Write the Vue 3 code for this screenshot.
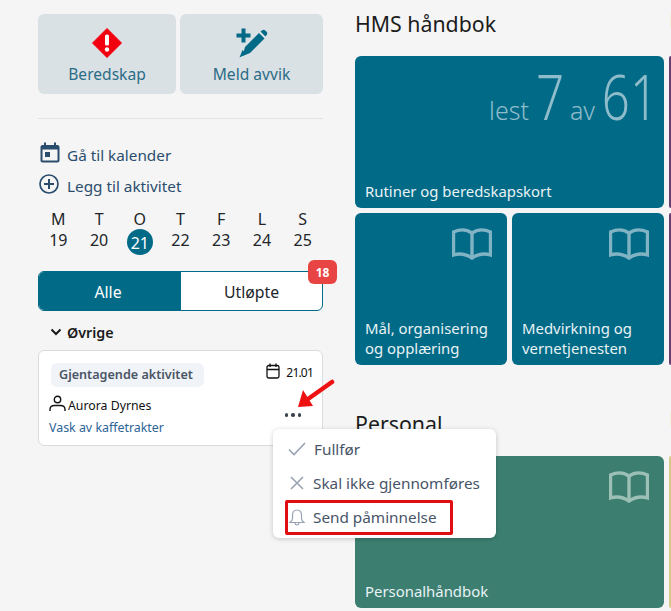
<script setup>
const days = [['M', 19], ['T', 20], ['O', 21], ['T', 22], ['F', 23], ['L', 24], ['S', 25]]
const book = 'M1.5 4C8 1 15 1.5 20 5C25 1.5 32 1 38.5 4V27C32 25 26 26 20 30C14 26 8 25 1.5 27Z'
</script>

<template>
  <div class="page">
    <aside class="left">
      <div class="actions">
        <div class="action first">
          <svg width="30" height="30" viewBox="0 0 30 30">
            <path d="M15 0.5L29.5 15L15 29.5L0.5 15Z" fill="#f2000f" stroke="#f2000f" stroke-linejoin="round" />
            <rect x="13" y="6.5" width="4" height="11" rx="1.6" fill="#fff" />
            <circle cx="15" cy="21.5" r="2.2" fill="#fff" />
          </svg>
          <span>Beredskap</span>
        </div>
        <div class="action second">
          <svg width="32" height="30" viewBox="0 0 32 30">
            <path d="M5.5 0.5H9.5V5.5H14.5V9.5H9.5V14.5H5.5V9.5H0.5V5.5H5.5Z" fill="#006a87" />
            <path d="M23 5L28.5 10.5L14 25L6.5 28L9 19Z" fill="#006a87" />
            <path d="M24.5 3.6L26 2.4C27 1.6 28.2 1.6 29.2 2.4L30.6 3.8C31.5 4.8 31.5 6 30.6 7L29.4 8.4Z" fill="#006a87" />
            <path d="M3.5 29.5L6.5 22L10.5 26Z" fill="#006a87" />
          </svg>
          <span>Meld avvik</span>
        </div>
      </div>
      <hr class="rule" />
      <div class="link cal-link">
        <svg width="20" height="21" viewBox="0 0 20 21">
          <path d="M4 0.5H6V3H14V0.5H16V3H17.5C18.6 3 19.5 3.9 19.5 5V18.5C19.5 19.6 18.6 20.5 17.5 20.5H2.5C1.4 20.5 0.5 19.6 0.5 18.5V5C0.5 3.9 1.4 3 2.5 3H4ZM2.5 7.5V18.5H17.5V7.5Z" fill="#2a4d6e" />
          <rect x="5" y="10" width="5" height="5" fill="#2a4d6e" />
        </svg>
        <span>Gå til kalender</span>
      </div>
      <div class="link add-link">
        <svg width="20" height="20" viewBox="0 0 20 20" fill="none" stroke="#2a4d6e" stroke-width="1.7">
          <circle cx="10" cy="10" r="9" />
          <path d="M10 5V15M5 10H15" stroke-width="2" />
        </svg>
        <span>Legg til aktivitet</span>
      </div>
      <div class="week">
        <div v-for="d in days" :key="d[1]" class="day">
          <span>{{ d[0] }}</span>
          <span class="num" :class="{ today: d[1] === 21 }">{{ d[1] }}</span>
        </div>
      </div>
      <div class="tabs">
        <div class="tab on">Alle</div>
        <div class="tab">Utløpte</div>
        <span class="badge">18</span>
      </div>
      <div class="group">
        <svg width="12" height="8" viewBox="0 0 12 8" fill="none" stroke="#1a1a1a" stroke-width="2">
          <path d="M1.5 1.5L6 6L10.5 1.5" />
        </svg>
        <span>Øvrige</span>
      </div>
      <div class="card">
        <div class="card-top">
          <span class="tag">Gjentagende aktivitet</span>
          <span class="date">
            <svg width="14" height="16" viewBox="0 0 14 16" fill="none" stroke="#111" stroke-width="1.3">
              <rect x="1" y="2.5" width="12" height="12.5" rx="1.8" />
              <path d="M1 6.5H13M4 0.5V4M10 0.5V4" />
            </svg>
            <span class="date-text">21.01</span>
          </span>
        </div>
        <div class="person">
          <svg width="17" height="17" viewBox="0 0 17 17" fill="none" stroke="#111" stroke-width="1.4">
            <circle cx="8.5" cy="4.5" r="3.2" />
            <path d="M1 16V14.5C1 11.8 3.2 10.5 5.5 10.5H11.5C13.8 10.5 16 11.8 16 14.5V16" />
          </svg>
          <span>Aurora Dyrnes</span>
        </div>
        <div class="card-bottom">
          <span class="task">Vask av kaffetrakter</span>
          <span class="dots"><i></i><i></i><i></i></span>
        </div>
        <svg class="arrow" width="37" height="31" viewBox="0 0 37 31">
          <path d="M34 4L10 21" stroke="#ee1111" stroke-width="4.5" stroke-linecap="round" />
          <path d="M0 29L5 12L15 28Z" fill="#ee1111" />
        </svg>
      </div>
    </aside>

    <main class="right">
      <h2>HMS håndbok</h2>
      <div class="tiles">
        <div class="tile wide">
          <div class="stat"><span class="small">lest</span><span class="big seven">7</span><span class="small">av</span><span class="big sixty">61</span></div>
          <div class="label">Rutiner og beredskapskort</div>
        </div>
        <div class="tile">
          <svg class="book" width="40" height="32" viewBox="0 0 40 32" fill="none" stroke="#80b3c3" stroke-width="3.4"><path :d="book" /><path d="M20 5V30" /></svg>
          <div class="label">Mål, organisering og opplæring</div>
        </div>
        <div class="tile">
          <svg class="book" width="40" height="32" viewBox="0 0 40 32" fill="none" stroke="#80b3c3" stroke-width="3.4"><path :d="book" /><path d="M20 5V30" /></svg>
          <div class="label">Medvirkning og vernetjenesten</div>
        </div>
      </div>
      <h2 class="second-h">Personal</h2>
      <div class="tiles">
        <div class="tile wide green">
          <svg class="book" width="40" height="32" viewBox="0 0 40 32" fill="none" stroke="#9cc0b6" stroke-width="3.4"><path :d="book" /><path d="M20 5V30" /></svg>
          <div class="label">Personalhåndbok</div>
        </div>
      </div>
    </main>

    <div class="strip purple"></div>
    <div class="strip purple two"></div>
    <div class="strip yellow"></div>
    <div class="strip faint"></div>
    <div class="strip faint low"></div>

    <div class="menu">
      <div class="item">
        <svg width="18" height="14" viewBox="0 0 18 14" fill="none" stroke="#98a2b3" stroke-width="1.6"><path d="M1 7.5L6 12.5L17 1" /></svg>
        <span class="t1">Fullfør</span>
      </div>
      <div class="item">
        <svg width="16" height="16" viewBox="0 0 16 16" fill="none" stroke="#98a2b3" stroke-width="1.6"><path d="M2 2L14 14M14 2L2 14" /></svg>
        <span>Skal ikke gjennomføres</span>
      </div>
      <div class="item">
        <svg width="16" height="17" viewBox="0 0 16 17" fill="none" stroke="#98a2b3" stroke-width="1.2"><path d="M8 1C5 1 3.5 3.2 3.5 6V9.5C3.5 11 2.5 12.2 1 13.5H15C13.5 12.2 12.5 11 12.5 9.5V6C12.5 3.2 11 1 8 1ZM6 14C6.2 15.3 7 16 8 16S9.8 15.3 10 14" /></svg>
        <span>Send påminnelse</span>
      </div>
      <div class="highlight"></div>
    </div>
  </div>
</template>

<style>
html, body { margin: 0; background: #f5f5f5; }
</style>

<style scoped>
.page {
  position: relative;
  width: 671px;
  height: 611px;
  overflow: hidden;
  background: #f5f5f5;
  display: flex;
  font-family: "Noto Sans", sans-serif;
  color: #212529;
}
.left { width: 285px; margin-left: 38px; padding-top: 14px; flex: none; }
.actions { display: flex; gap: 4px; }
.action {
  height: 80px;
  background: #dae1e5;
  border-radius: 6px;
  display: flex;
  flex-direction: column;
  align-items: center;
  color: #2b6c86;
  font-size: 15.6px;
  line-height: 22px;
  padding-top: 14px;
  box-sizing: border-box;
}
.action svg { margin-bottom: 5px; }
.first { width: 138px; }
.second { width: 143px; }
.rule { border: 0; border-top: 1px solid #dfe3e6; margin: 24px 0 0; }
.link { display: flex; align-items: flex-start; gap: 7px; height: 22px; color: #2a4d6e; font-size: 15.3px; margin-left: 2px; }
.link span { line-height: 22px; padding-top: 2px; }
.link svg { flex: none; }
.cal-link { margin-top: 23px; }
.add-link { margin-top: 10px; margin-left: 1px; gap: 8px; }
.add-link span { padding-top: 1px; }
.week { display: flex; margin: 13px 0 0 0; width: 285px; padding-left: 0; }
.day { width: 40.8px; display: flex; flex-direction: column; align-items: center; font-size: 16px; line-height: 20px; color: #212529; }
.num { width: 26px; height: 26px; line-height: 24px; text-align: center; margin-top: -1px; }
.today { background: #006a87; color: #fff; border-radius: 50%; line-height: 28px; margin-top: 0; }
.tabs { position: relative; display: flex; height: 40px; margin-top: 16px; border: 1px solid #006a87; box-sizing: border-box; border-radius: 6px; background: #fff; }
.tab { width: 50%; display: flex; align-items: center; justify-content: center; font-size: 15.8px; padding-top: 1px; box-sizing: border-box; }
.tab.on { width: 142px; flex: none; background: #006a87; color: #fff; border-radius: 5px 0 0 5px; padding-right: 4px; }
.tab + .tab { flex: 1; }
.badge {
  position: absolute; right: -15px; top: -12px;
  width: 29px; height: 24px; border-radius: 6px; background: #e94444; color: #fff;
  font-size: 12px; font-weight: 700; display: flex; align-items: center; justify-content: center;
}
.group { display: flex; align-items: center; gap: 5px; margin: 11px 0 0 12px; height: 20px; font-size: 14.3px; font-weight: 600; color: #1a1a1a; }
.card {
  position: relative;
  margin-top: 8px;
  height: 96px;
  box-sizing: border-box;
  background: #fff;
  border: 1px solid #d8dcdf;
  border-radius: 6px;
  padding: 12px 10px 0 10px;
}
.card-top { display: flex; justify-content: space-between; align-items: flex-start; }
.tag { background: #f0f3f7; color: #4a5565; font-size: 12.6px; font-weight: 600; line-height: 24px; padding: 0 8px; width: 137px; white-space: nowrap; border-radius: 6px; margin-left: 2px; }
.date { display: flex; align-items: flex-start; gap: 6px; font-size: 12px; letter-spacing: -0.8px; color: #111; line-height: 17px; margin-right: -1px; }
.date-text { padding-top: 1px; }
.person { display: flex; align-items: flex-start; gap: 3px; font-size: 12.3px; line-height: 18px; color: #111; margin-top: 8px; }
.person span { margin-left: -1px; padding-top: 2px; }
.card-bottom { display: flex; justify-content: space-between; align-items: center; margin-top: 3px; }
.task { color: #2d6496; font-size: 12.4px; line-height: 20px; }
.dots { display: flex; gap: 3px; margin-right: 11px; margin-top: -26px; }
.dots i { width: 3.5px; height: 3.5px; border-radius: 50%; background: #3a4450; display: block; }
.arrow { position: absolute; right: -13px; top: 27px; }
.right { margin-left: 32px; flex: none; width: 310px; }
h2 { margin: 0; font-size: 21.3px; font-weight: 400; line-height: 28px; color: #1c1c1c; padding-top: 10px; }
.tiles { display: grid; grid-template-columns: 152px 152px; gap: 5px; margin-top: 18px; }
.tile {
  position: relative;
  height: 152px;
  border-radius: 6px;
  background: #006a87;
  color: #fff;
}
.wide { grid-column: span 2; }
.green { background: #3c7f71; }
.label { position: absolute; left: 10px; right: 10px; bottom: 7px; font-size: 14.9px; line-height: 20px; color: #e9f2f5; }
.book { position: absolute; right: 15px; top: 15px; }
.stat { position: absolute; right: 6px; top: 2px; display: flex; align-items: baseline; gap: 6px; color: #8fbccb; font-weight: 300; }
.small { font-size: 25px; font-weight: 300; }
.big { display: inline-block; font-size: 63px; line-height: 76px; font-weight: 300; transform: scaleX(0.78); transform-origin: right center; }
.seven { margin-left: -7px; }
.sixty { margin-left: -15px; }
.second-h { margin-top: 45px; padding-top: 0; }
.strip { position: absolute; left: 669px; width: 2px; top: 56px; height: 152px; background: #6a3d72; border-radius: 4px 0 0 4px; }
.strip.two { top: 213px; }
.strip.yellow { top: 456px; background: #d8c88c; }
.strip.faint { left: 670px; width: 1px; top: 15px; height: 12px; background: #f5f0d8; border-radius: 0; }
.strip.low { top: 413px; }
.menu {
  position: absolute; left: 273px; top: 429px; width: 223px; height: 109px;
  background: #fff; border-radius: 6px; box-shadow: 0 1px 5px rgba(0,0,0,.2);
  padding: 3px 0 0 15px; box-sizing: border-box;
  font-size: 15.3px; color: #475467;
}
.item { display: flex; align-items: center; gap: 7px; height: 34px; }
.item svg { flex: none; width: 18px; }
.t1 { margin-left: 1px; }
.highlight { position: absolute; left: 12px; top: 71px; width: 168px; height: 35px; border: 3px solid #e00d12; box-sizing: border-box; border-radius: 2px; }
</style>
